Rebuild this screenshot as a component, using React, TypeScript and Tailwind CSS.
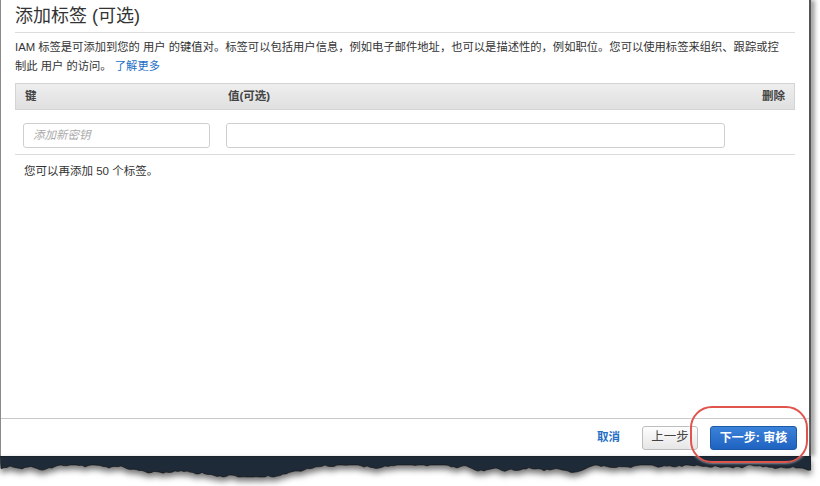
import React from "react";

const FONT = { fontFamily: '"Liberation Sans", "Noto Sans CJK SC", sans-serif' };

// jagged bottom edge of the torn screenshot, seeded so it stays the same each run
function tornPath(width: number): string {
  let seed = 7;
  const rnd = () => {
    seed = (seed * 9301 + 49297) % 233280;
    return seed / 233280;
  };
  let d = `M0 0 L${width} 0 `;
  let y = 14;
  const pts: string[] = [];
  for (let x = width; x >= 0; x -= 3) {
    y += (rnd() - 0.5) * 3.2;
    y = Math.max(9, Math.min(21, y));
    pts.push(`L${x} ${y.toFixed(1)}`);
  }
  d += pts.join(" ") + " Z";
  return d;
}

export default function App() {
  return (
    <div className="relative h-[486px] w-[820px] overflow-hidden bg-white text-[#333]" style={FONT}>
      <div className="flex w-[811px] flex-col">
        <div className="flex h-[456px] flex-col border-l border-r-2 border-l-[#8a8a8a] border-r-[#555] bg-white shadow-[4px_0_4px_rgba(0,0,0,0.35)]">
          <div className="flex-1 px-[14px]">
            <h1 className="border-b border-[#dcdcdc] pb-[3px] pt-[4px] text-[18px] leading-[25px] text-[#333]">
              添加标签 (可选)
            </h1>
            <p className="mt-[5px] whitespace-nowrap text-[11.3px] leading-[19px] text-[#333]">
              IAM 标签是可添加到您的 用户 的键值对。标签可以包括用户信息，例如电子邮件地址，也可以是描述性的，例如职位。您可以使用标签来组织、跟踪或控
              <br />
              制此 用户 的访问。 <span className="text-[#1f6fc5]">了解更多</span>
            </p>

            <div className="mt-[7px]">
              <div className="grid h-[27px] grid-cols-[203px_515px_1fr] items-center border border-[#d4d4d4] bg-gradient-to-b from-[#eeeeee] to-[#e0e0e0] text-[11.5px] font-bold text-[#444]">
                <div className="pl-[9px]">键</div>
                <div className="pl-[9px]">值(可选)</div>
                <div className="pr-[9px] text-right">删除</div>
              </div>
              <div className="grid h-[45px] grid-cols-[203px_515px_1fr] items-start border-b border-[#dcdcdc] pt-[13px]">
                <div className="pl-[8px]">
                  <div className="flex h-[25px] w-[187px] items-center rounded-[3px] border border-[#cfcfcf] px-[9px] text-[11.5px] italic text-[#aaa]">
                    添加新密钥
                  </div>
                </div>
                <div className="pl-[8px]">
                  <div className="h-[25px] w-[499px] rounded-[3px] border border-[#cfcfcf]" />
                </div>
                <div />
              </div>
              <p className="mt-[8px] pl-[9px] text-[11.5px] leading-[16px] text-[#333]">您可以再添加 50 个标签。</p>
            </div>
          </div>

          <div className="flex h-[38px] items-center justify-end border-t border-[#c8c8c8] pr-[12px]">
            <span className="mr-[22px] text-[11.5px] font-bold text-[#1f6fc5]">取消</span>
            <button className="mr-[12px] h-[24px] w-[56px] rounded-[3px] border border-[#bdbdbd] bg-gradient-to-b from-[#fdfdfd] to-[#e6e6e6] text-[12.5px] text-[#444]">
              上一步
            </button>
            <button className="h-[24px] w-[87px] rounded-[3px] border border-[#1c5aa8] bg-gradient-to-b from-[#3b82d9] to-[#1f63c1] text-[12px] font-bold text-white">
              下一步: 审核
            </button>
          </div>
        </div>

        <svg width="811" height="30" className="[filter:drop-shadow(0_4px_3px_rgba(0,0,0,0.55))]">
          <path d={tornPath(811)} fill="#1f2a38" stroke="#111" strokeWidth="0.6" />
        </svg>
      </div>

      {/* red highlight round the next button */}
      <div className="absolute left-[690px] top-[406px] h-[57px] w-[118px] rounded-[22px] border-2 border-[#e0544e] shadow-[0_0_3px_rgba(255,255,255,0.9)]" />
    </div>
  );
}
